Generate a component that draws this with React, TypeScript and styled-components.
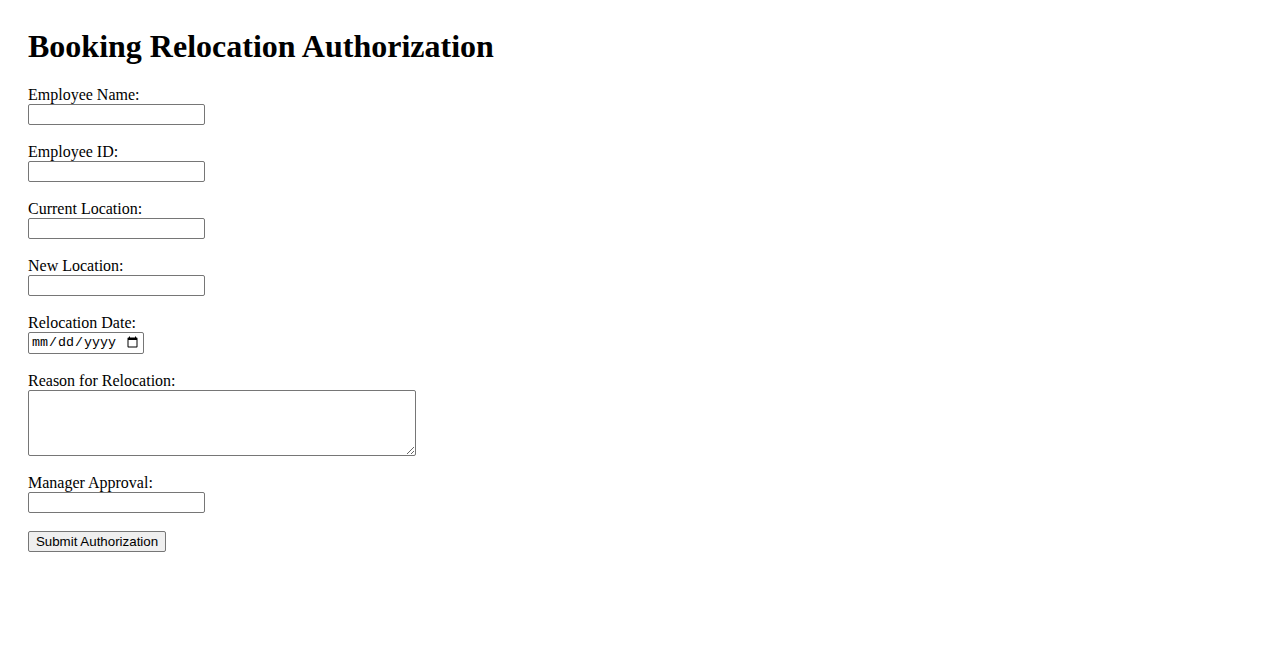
import React from "react";
import styled, { createGlobalStyle } from "styled-components";

const GlobalStyle = createGlobalStyle`
  html, body { background: #ffffff; }
  body {
    margin: 8px;
    font-family: "Liberation Serif", "Times New Roman", serif;
    font-size: 16px;
    color: #000000;
  }
`;

const Page = styled.div`
  padding: 20px;
`;

const Title = styled.h1`
  margin: 0 0 21px 0;
  font-family: "Liberation Serif", "Times New Roman", serif;
  font-size: 32px;
  font-weight: bold;
  line-height: 37px;
`;

const Form = styled.form`
  display: flex;
  flex-direction: column;
  align-items: flex-start;
`;

const Field = styled.div`
  display: flex;
  flex-direction: column;
  align-items: flex-start;
  margin-bottom: 18px;
`;

const Label = styled.label`
  font-family: "Liberation Serif", "Times New Roman", serif;
  font-size: 16px;
  line-height: 18px;
  height: 18px;
`;

const controlBase = `
  box-sizing: border-box;
  border: 1px solid #767676;
  border-radius: 2px;
  background: #ffffff;
  color: #000000;
  margin: 0;
`;

const TextInput = styled.input`
  ${controlBase}
  width: 177px;
  height: 21px;
  padding: 1px 2px;
  font-family: "Liberation Sans", Arial, sans-serif;
  font-size: 13.33px;
`;

const DateInput = styled.input`
  ${controlBase}
  width: 116px;
  height: 22px;
  padding: 1px 2px;
  font-family: "Liberation Mono", "Courier New", monospace;
  font-size: 13.33px;
`;

const TextArea = styled.textarea`
  ${controlBase}
  width: 388px;
  height: 66px;
  padding: 2px;
  font-family: "Liberation Mono", "Courier New", monospace;
  font-size: 13.33px;
  display: block;
`;

const SubmitButton = styled.button`
  box-sizing: border-box;
  width: 138px;
  height: 21px;
  padding: 1px 6px;
  margin: 0;
  border: 1px solid #767676;
  border-radius: 2px;
  background: #efefef;
  color: #000000;
  font-family: "Liberation Sans", Arial, sans-serif;
  font-size: 13.33px;
  line-height: 15px;
  white-space: nowrap;
`;

const fields: { id: string; label: string }[] = [
  { id: "employeeName", label: "Employee Name:" },
  { id: "employeeId", label: "Employee ID:" },
  { id: "currentLocation", label: "Current Location:" },
  { id: "newLocation", label: "New Location:" },
];

export default function App() {
  return (
    <>
      <GlobalStyle />
      <Page>
        <Title>Booking Relocation Authorization</Title>
        <Form onSubmit={(e) => e.preventDefault()}>
          {fields.map((f) => (
            <Field key={f.id}>
              <Label htmlFor={f.id}>{f.label}</Label>
              <TextInput id={f.id} type="text" />
            </Field>
          ))}
          <Field>
            <Label htmlFor="relocationDate">Relocation Date:</Label>
            <DateInput id="relocationDate" type="date" />
          </Field>
          <Field>
            <Label htmlFor="reason">Reason for Relocation:</Label>
            <TextArea id="reason" />
          </Field>
          <Field>
            <Label htmlFor="managerApproval">Manager Approval:</Label>
            <TextInput id="managerApproval" type="text" />
          </Field>
          <SubmitButton type="submit">Submit Authorization</SubmitButton>
        </Form>
      </Page>
    </>
  );
}
